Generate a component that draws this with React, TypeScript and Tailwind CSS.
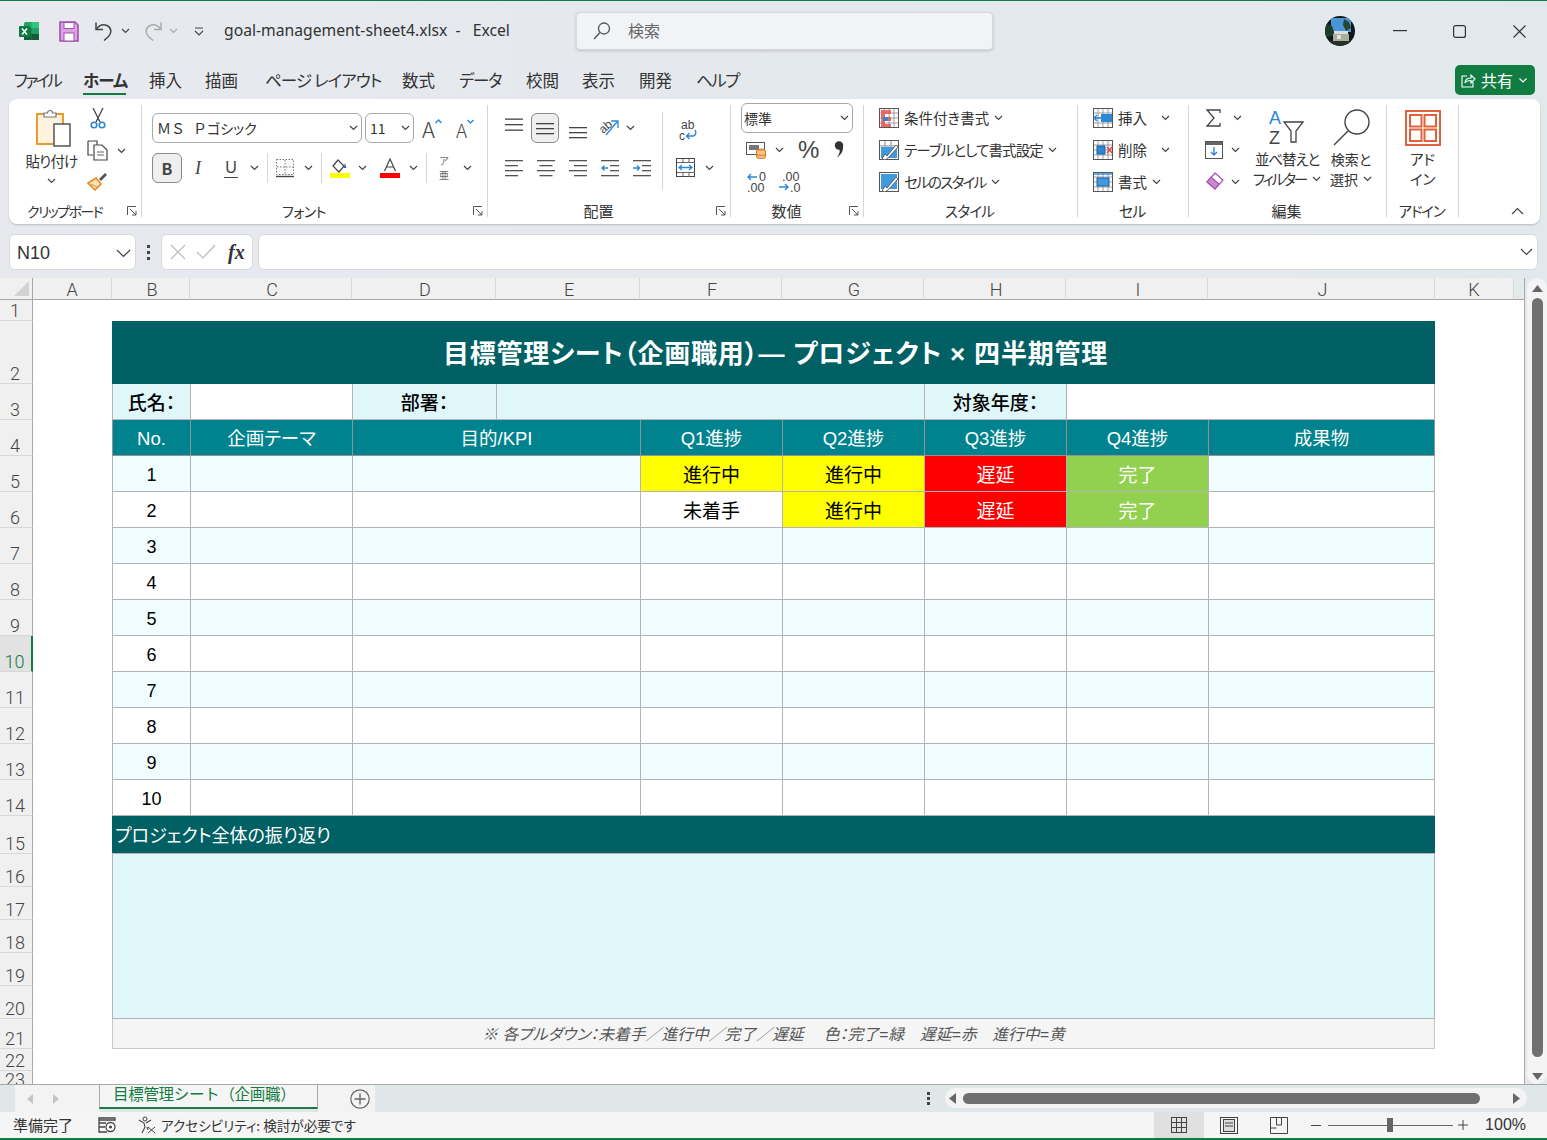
import type { ReactNode } from "react";

const GRAY = "#444";

function Chev({ className = "" }: { className?: string }) {
  return (
    <svg width="9" height="6" viewBox="0 0 9 6" className={className}>
      <path d="M1 1l3.5 3.5L8 1" fill="none" stroke={GRAY} strokeWidth="1.2" />
    </svg>
  );
}

function ExcelLogo() {
  return (
    <svg width="20" height="20" viewBox="0 0 20 20">
      <rect x="5" y="1" width="15" height="18" rx="1.5" fill="#21a366" />
      <rect x="12.5" y="1" width="7.5" height="6" fill="#33c481" />
      <rect x="5" y="7" width="7.5" height="6" fill="#107c41" />
      <rect x="12.5" y="13" width="7.5" height="6" fill="#185c37" />
      <rect x="5" y="13" width="7.5" height="6" fill="#185c37" />
      <rect x="0" y="5" width="11" height="11" rx="1" fill="#0e7a43" />
      <path d="M3 7.5l5 6M8 7.5l-5 6" stroke="#fff" strokeWidth="1.5" />
    </svg>
  );
}

function SaveIcon() {
  return (
    <svg width="20" height="21" viewBox="0 0 20 21">
      <path d="M1 1h15l3 3v16H1z" fill="#d9a7e0" stroke="#a24fb3" strokeWidth="1.6" />
      <rect x="5" y="1.5" width="10" height="6" fill="#fff" stroke="#a24fb3" />
      <rect x="5" y="12" width="10" height="8" fill="#fff" stroke="#a24fb3" />
    </svg>
  );
}

function Undo({ color }: { color: string }) {
  return (
    <svg width="20" height="20" viewBox="0 0 20 20">
      <path d="M2 1.5v7h7" fill="none" stroke={color} strokeWidth="1.5" />
      <path d="M2.5 8C5 4.5 9 3 13 4.5c4.5 2 5 7.5 1.5 11L10 19.5" fill="none" stroke={color} strokeWidth="1.5" />
    </svg>
  );
}

function SearchIcon() {
  return (
    <svg width="20" height="20" viewBox="0 0 20 20">
      <circle cx="12" cy="7.5" r="5.5" fill="none" stroke="#555" strokeWidth="1.3" />
      <path d="M8 11.5L2 18" stroke="#555" strokeWidth="1.4" />
    </svg>
  );
}

function Avatar() {
  return (
    <svg width="30" height="30" viewBox="0 0 30 30">
      <defs>
        <clipPath id="av">
          <circle cx="15" cy="15" r="15" />
        </clipPath>
      </defs>
      <g clipPath="url(#av)">
        <rect width="30" height="30" fill="#10181c" />
        <rect x="6" y="2" width="20" height="14" fill="#4a95d8" />
        <path d="M19 3l5 3 2 6-5 3-3-6z" fill="#24482f" />
        <path d="M0 7l7 3 3 9-10 3z" fill="#1f3d2a" />
        <rect x="9" y="15" width="14" height="3" fill="#d9dfe0" />
        <rect x="8" y="18" width="16" height="7" fill="#a9ae9f" />
        <rect x="12" y="19" width="4" height="4" fill="#e4e6dc" />
        <rect x="0" y="25" width="30" height="5" fill="#2b2f2c" />
      </g>
    </svg>
  );
}

function PasteIcon() {
  return (
    <svg width="36" height="38" viewBox="0 0 36 38">
      <rect x="1" y="5" width="26" height="30" fill="#fff3e0" stroke="#ec9a2e" strokeWidth="2" />
      <path d="M8 8V4h3.5a2.5 2.5 0 015 0H20v4z" fill="#fff" stroke="#777" strokeWidth="1.2" />
      <rect x="18" y="15" width="16" height="22" fill="#fff" stroke="#555" strokeWidth="1.5" />
    </svg>
  );
}

function ScissorsIcon() {
  return (
    <svg width="16" height="21" viewBox="0 0 16 21">
      <path d="M3 0l7 14M13 0L6 14" stroke="#444" strokeWidth="1.3" />
      <circle cx="4" cy="17" r="2.8" fill="none" stroke="#2b88d8" strokeWidth="1.6" />
      <circle cx="12" cy="17" r="2.8" fill="none" stroke="#2b88d8" strokeWidth="1.6" />
    </svg>
  );
}

function CopyIcon() {
  return (
    <svg width="21" height="21" viewBox="0 0 21 21">
      <path d="M1 1h9v4M1 1v14h5" fill="none" stroke="#444" strokeWidth="1.2" />
      <path d="M7 5h8l5 5v10H7z" fill="#fff" stroke="#444" strokeWidth="1.2" />
      <path d="M10 12h7M10 15h7" stroke="#666" />
    </svg>
  );
}

function BrushIcon() {
  return (
    <svg width="21" height="19" viewBox="0 0 21 19">
      <path d="M1 11l8-5 5 6-6 6z" fill="#fbe3bf" stroke="#e88a1e" strokeWidth="1.6" />
      <path d="M4 12l6 3" stroke="#e88a1e" />
      <path d="M12 7l6-6 2 2-6 6z" fill="#555" />
    </svg>
  );
}

function Launcher() {
  return (
    <svg width="10" height="10" viewBox="0 0 10 10">
      <path d="M0.5 9V0.5H9" fill="none" stroke="#555" />
      <path d="M3 3l6 6M5 9h4V5" fill="none" stroke="#555" />
    </svg>
  );
}

function GrowFont({ up }: { up: boolean }) {
  return (
    <span className="flex h-[20px] items-start leading-none">
      <span className={`${up ? "text-[22px]" : "mt-[2px] text-[19px]"} leading-[20px] font-light text-[#444]`}>A</span>
      <svg width="7" height="5" viewBox="0 0 7 5" className="mt-[1px]">
        <path d={up ? "M0.5 4l3-3 3 3" : "M0.5 1l3 3 3-3"} fill="none" stroke="#2b88d8" strokeWidth="1.4" />
      </svg>
    </span>
  );
}

function BorderIcon() {
  return (
    <svg width="18" height="19" viewBox="0 0 18 19">
      <rect x="0.5" y="0.5" width="17" height="15" fill="none" stroke="#777" strokeDasharray="1.5 1.5" />
      <path d="M9 1v14M1 8h16" stroke="#777" strokeDasharray="1.5 1.5" />
      <path d="M0 17.5h18" stroke="#444" strokeWidth="1.4" />
    </svg>
  );
}

function FillIcon() {
  return (
    <svg width="20" height="20" viewBox="0 0 20 20">
      <path d="M3 8l5-6 6 6-5 6z" fill="#fff" stroke="#444" strokeWidth="1.2" />
      <path d="M15 5l1.5 5h-3z" fill="#2b6cb0" />
      <rect x="0" y="15" width="20" height="5" fill="#ffff00" />
    </svg>
  );
}

function FontColorIcon() {
  return (
    <svg width="20" height="20" viewBox="0 0 20 20">
      <path d="M4.5 13L10 1l5.5 12M6.5 9h7" fill="none" stroke="#444" strokeWidth="1.2" />
      <rect x="0" y="15" width="20" height="5" fill="#ff0000" />
    </svg>
  );
}

function Lines({ rows }: { rows: number[] }) {
  return (
    <svg width="18" height="18" viewBox="0 0 18 18">
      {rows.map((y) => (
        <rect key={y} x="0" y={y} width="18" height="1.3" fill="#444" />
      ))}
    </svg>
  );
}

function LeftLines({ align }: { align: "l" | "c" | "r" }) {
  const widths = [18, 13, 18, 13];
  return (
    <svg width="18" height="18" viewBox="0 0 18 18">
      {widths.map((w, i) => (
        <rect
          key={i}
          x={align === "l" ? 0 : align === "r" ? 18 - w : (18 - w) / 2}
          y={1 + i * 5}
          width={w}
          height="1.3"
          fill="#555"
        />
      ))}
    </svg>
  );
}

function IndentIcon({ inc }: { inc: boolean }) {
  return (
    <svg width="18" height="18" viewBox="0 0 18 18">
      <rect x="0" y="1" width="18" height="1.3" fill="#555" />
      <rect x="9" y="6" width="9" height="1.3" fill="#555" />
      <rect x="9" y="11" width="9" height="1.3" fill="#555" />
      <rect x="0" y="16" width="18" height="1.3" fill="#555" />
      <path d={inc ? "M0 9h6M4 6.5L6.5 9 4 11.5" : "M7 9H1M3.5 6.5L1 9l2.5 2.5"} fill="none" stroke="#2b88d8" strokeWidth="1.4" />
    </svg>
  );
}

function OrientIcon() {
  return (
    <svg width="22" height="20" viewBox="0 0 22 20" className="overflow-visible">
      <text x="1" y="13" fontSize="12" fill="#444" transform="rotate(-40 7 9)" fontFamily="Liberation Sans">ab</text>
      <path d="M8 17L19 4M13 3h7v7" fill="none" stroke="#2b88d8" strokeWidth="1.3" />
    </svg>
  );
}

function WrapIcon() {
  return (
    <svg width="20" height="20" viewBox="0 0 20 20" className="overflow-visible">
      <text x="3" y="9" fontSize="12" fill="#444" fontFamily="Liberation Sans">ab</text>
      <text x="1" y="20" fontSize="12" fill="#444" fontFamily="Liberation Sans">c</text>
      <path d="M17 10c2 3 0 6-2 6H9M11.5 13L8.5 16l3 3" fill="none" stroke="#2b88d8" strokeWidth="1.4" />
    </svg>
  );
}

function MergeIcon() {
  return (
    <svg width="20" height="20" viewBox="0 0 20 20">
      <rect x="0.5" y="0.5" width="18" height="18" fill="#fff" stroke="#444" />
      <path d="M1 4.5h18M1 14.5h18M7 1v4M13 1v4M7 15v4M13 15v4" stroke="#666" />
      <path d="M3 9.5h13M6 7L3 9.5 6 12M13 7l3 2.5L13 12" fill="none" stroke="#2b88d8" strokeWidth="1.3" />
    </svg>
  );
}

function AccountingIcon() {
  return (
    <svg width="21" height="20" viewBox="0 0 21 20">
      <rect x="0.5" y="2.5" width="18" height="12" fill="#fff" stroke="#555" />
      <rect x="3" y="5" width="10" height="5" fill="#777" />
      <ellipse cx="15" cy="11" rx="4.5" ry="2" fill="#f5a54a" stroke="#d9741c" />
      <path d="M10.5 11v6c0 2 9 2 9 0v-6" fill="#f8c488" stroke="#d9741c" />
      <path d="M10.5 14c0 2 9 2 9 0" fill="none" stroke="#d9741c" />
    </svg>
  );
}

function CommaIcon() {
  return (
    <svg width="10" height="17" viewBox="0 0 10 17">
      <circle cx="5" cy="4.5" r="4.2" fill="#333" />
      <path d="M9 5c0.5 5-2 9-6 11.5C5.5 13 6 11 5.5 8z" fill="#333" />
    </svg>
  );
}

function DecimalIcon({ inc }: { inc: boolean }) {
  return (
    <svg width="22" height="22" viewBox="0 0 22 22" fontFamily="Liberation Sans" fontSize="12.5" fill="#444" className="overflow-visible">
      {inc ? (
        <>
          <text x="13" y="10">0</text>
          <text x="1" y="21">.00</text>
          <path d="M11 6H2M5 3L2 6l3 3" fill="none" stroke="#2b88d8" strokeWidth="1.4" />
        </>
      ) : (
        <>
          <text x="4" y="10">.00</text>
          <text x="12" y="21">.0</text>
          <path d="M1 16h9M7 13l3 3-3 3" fill="none" stroke="#2b88d8" strokeWidth="1.4" />
        </>
      )}
    </svg>
  );
}

function TableGrid({ children }: { children?: ReactNode }) {
  return (
    <svg width="20" height="20" viewBox="0 0 20 20">
      <rect x="0.5" y="0.5" width="19" height="19" fill="#fff" stroke="#555" />
      <path d="M5 1v18M10 1v18M15 1v18M1 5h18M1 10h18M1 15h18" stroke="#888" strokeWidth="0.8" />
      {children}
    </svg>
  );
}

function CondIcon() {
  return (
    <TableGrid>
      <path d="M2 2h10v4H6v3h6v4H6v3h6v3H2z" fill="#ef5350" fillOpacity="0.85" />
      <rect x="4" y="9" width="5" height="4" fill="#2b88d8" />
    </TableGrid>
  );
}

function TableStyleIcon() {
  return (
    <svg width="20" height="20" viewBox="0 0 20 20">
      <rect x="0.5" y="0.5" width="19" height="19" fill="#fff" stroke="#555" />
      <path d="M6 1v5M12 1v5M1 6h18" stroke="#888" />
      <rect x="2" y="7" width="16" height="11" fill="#3f9ae0" />
      <path d="M3 19l3-5 2 2 9-11 2 2-9 10-4 3z" fill="#fff" stroke="#445" strokeWidth="0.8" />
    </svg>
  );
}

function CellStyleIcon() {
  return (
    <svg width="20" height="20" viewBox="0 0 20 20">
      <rect x="0.5" y="0.5" width="19" height="19" fill="#fff" stroke="#555" />
      <rect x="2" y="2" width="16" height="15" fill="#3f9ae0" />
      <path d="M3 19l3-5 2 2 9-11 2 2-9 10-4 3z" fill="#fff" stroke="#445" strokeWidth="0.8" />
    </svg>
  );
}

function InsertIcon() {
  return (
    <TableGrid>
      <rect x="8" y="6" width="11" height="8" fill="#2b88d8" />
      <path d="M9 10H1M4 7l-3 3 3 3" fill="none" stroke="#2b88d8" strokeWidth="1.5" />
    </TableGrid>
  );
}

function DeleteIcon() {
  return (
    <TableGrid>
      <rect x="4" y="6" width="8" height="8" fill="#2b88d8" stroke="#1a5fa0" />
      <path d="M14 7l5 6M19 7l-5 6" stroke="#e53935" strokeWidth="1.3" />
    </TableGrid>
  );
}

function FormatIcon() {
  return (
    <TableGrid>
      <rect x="4" y="6" width="12" height="8" fill="#3f9ae0" stroke="#1a5fa0" />
      <path d="M1 2h18" stroke="#2b88d8" strokeWidth="1.4" />
    </TableGrid>
  );
}

function SigmaIcon() {
  return (
    <svg width="17" height="18" viewBox="0 0 17 18">
      <path d="M15 4V1H2l7 8-7 8h13v-3" fill="none" stroke="#444" strokeWidth="1.3" />
    </svg>
  );
}

function FillDownIcon() {
  return (
    <svg width="18" height="18" viewBox="0 0 18 18">
      <rect x="0.5" y="0.5" width="17" height="17" fill="#fff" stroke="#555" />
      <rect x="1" y="1" width="16" height="3" fill="#666" />
      <path d="M9 6v8M6 11l3 3 3-3" fill="none" stroke="#2b88d8" strokeWidth="1.4" />
    </svg>
  );
}

function EraserIcon() {
  return (
    <svg width="20" height="20" viewBox="0 0 20 20">
      <path d="M10 1l8 7-8 9-8-7z" fill="#fff" stroke="#a24fb3" strokeWidth="1.2" />
      <path d="M2 10l4-5 8 7-4 5z" fill="#c78bd2" stroke="#a24fb3" strokeWidth="1.2" />
    </svg>
  );
}

function SortFilterIcon() {
  return (
    <svg width="36" height="36" viewBox="0 0 36 36" fontFamily="Liberation Sans" fontSize="18">
      <text x="0" y="14" fill="#2b88d8">A</text>
      <text x="0" y="34" fill="#444">Z</text>
      <path d="M15 12h19l-7 9v11h-5V21z" fill="#fff" stroke="#444" strokeWidth="1.3" />
    </svg>
  );
}

function FindIcon() {
  return (
    <svg width="40" height="37" viewBox="0 0 40 37">
      <circle cx="26" cy="13" r="12" fill="#fff" stroke="#444" strokeWidth="1.4" />
      <path d="M17 22L3 36" stroke="#444" strokeWidth="1.4" />
    </svg>
  );
}

function AddinIcon() {
  return (
    <svg width="36" height="36" viewBox="0 0 36 36">
      <rect x="1" y="1" width="34" height="34" fill="#fff" stroke="#e0623a" strokeWidth="2" />
      <rect x="5" y="5" width="11.5" height="11.5" fill="none" stroke="#e0623a" strokeWidth="2" />
      <rect x="19.5" y="5" width="11.5" height="11.5" fill="none" stroke="#e0623a" strokeWidth="2" />
      <rect x="5" y="19.5" width="11.5" height="11.5" fill="none" stroke="#e0623a" strokeWidth="2" />
      <rect x="19.5" y="19.5" width="11.5" height="11.5" fill="none" stroke="#e0623a" strokeWidth="2" />
    </svg>
  );
}

function ShareIcon() {
  return (
    <svg width="15" height="15" viewBox="0 0 15 15">
      <path d="M6 3H1v11h11V9" fill="none" stroke="#fff" strokeWidth="1.1" />
      <path d="M4 10c0-4 3-5 6-5V2l4 4-4 4V7.5c-3 0-5 .5-6 2.5z" fill="none" stroke="#fff" strokeWidth="1.1" />
    </svg>
  );
}

function Group({
  label,
  labelClass = "",
  launcher,
  className,
  children,
}: {
  label: string;
  labelClass?: string;
  launcher?: boolean;
  className: string;
  children: ReactNode;
}) {
  return (
    <div className={`my-[6px] flex h-[112px] shrink-0 flex-col border-r border-[#d5d5d5] ${className}`}>
      <div className="h-[97px]">{children}</div>
      <div
        className={`grid h-[15px] grid-cols-[1fr_auto_1fr] items-center leading-[18px] text-[#333] ${
          launcher ? "pr-[21px]" : "pr-[2px]"
        }`}
      >
        <span />
        <span className={`whitespace-pre ${labelClass}`}>{label}</span>
        {launcher ? (
          <span className="-mr-[17px] justify-self-end">
            <Launcher />
          </span>
        ) : (
          <span />
        )}
      </div>
    </div>
  );
}

function Divider() {
  return <div className="h-[30px] w-px shrink-0 bg-[#d5d5d5]" />;
}

function TitleBar() {
  return (
    <div className="flex h-[60px] items-center text-[#333]">
      <div className="ml-[19px]">
        <ExcelLogo />
      </div>
      <div className="ml-[20px]">
        <SaveIcon />
      </div>
      <div className="ml-[15px]">
        <Undo color="#444" />
      </div>
      <Chev className="ml-[7px]" />
      <div className="ml-[13px] scale-x-[-1]">
        <Undo color="#aaa" />
      </div>
      <svg width="9" height="6" viewBox="0 0 9 6" className="ml-[6px]">
        <path d="M1 1l3.5 3.5L8 1" fill="none" stroke="#aaa" strokeWidth="1.2" />
      </svg>
      <svg width="10" height="9" viewBox="0 0 10 9" className="ml-[16px]">
        <path d="M1 1h8M1 4l4 4 4-4" fill="none" stroke="#444" strokeWidth="1.1" />
      </svg>
      <span className="ml-[20px] w-[352px] font-['Noto_Sans',sans-serif] text-[15.7px] whitespace-pre">goal-management-sheet4.xlsx  -   Excel</span>
      <div className="flex h-[38px] w-[417px] items-center rounded-[4px] border border-[#d8dade] bg-[#f1f3f6] pl-[15px] shadow-[0_1px_3px_rgba(0,0,0,0.18)]">
        <SearchIcon />
        <span className="-mt-[2px] ml-[16px] text-[16px] text-[#666]">検索</span>
      </div>
      <div className="ml-[332px]">
        <Avatar />
      </div>
      <svg width="14" height="2" viewBox="0 0 14 2" className="ml-[38px]">
        <rect width="14" height="1.2" fill="#333" />
      </svg>
      <svg width="13" height="13" viewBox="0 0 13 13" className="ml-[46px]">
        <rect x="0.6" y="0.6" width="11.8" height="11.8" rx="2" fill="none" stroke="#333" strokeWidth="1.2" />
      </svg>
      <svg width="13" height="13" viewBox="0 0 13 13" className="ml-[47px]">
        <path d="M0.5 0.5l12 12M12.5 0.5l-12 12" stroke="#333" strokeWidth="1.1" />
      </svg>
    </div>
  );
}

const TABS = [
  ["ファイル", "tracking-[-2.8px] w-[46px]"],
  ["ホーム", "tracking-[-1px] w-[43px] h-[27px] border-b-[2.5px] border-[#107c41] font-bold"],
  ["挿入", "w-[33px]"],
  ["描画", "w-[34px]"],
  ["ページ レイアウト", "tracking-[-0.9px] ml-[3px] w-[114px]"],
  ["数式", "w-[34px]"],
  ["データ", "tracking-[-1.4px] w-[44px]"],
  ["校閲", "w-[33px]"],
  ["表示", "w-[34px]"],
  ["開発", "w-[34px]"],
  ["ヘルプ", "tracking-[-1.4px] w-[42px]"],
];

function MenuBar() {
  return (
    <div className="flex h-[38px] items-start pr-[12px] pl-[14px]">
      <div className="flex gap-[23px] pt-[7px] text-[16.5px] leading-[24px] text-[#333]">
        {TABS.map(([t, cls]) => (
          <span key={t} className={`whitespace-pre ${cls}`}>
            {t}
          </span>
        ))}
      </div>
      <div className="mt-[4px] ml-auto flex h-[30px] w-[80px] items-center rounded-[5px] bg-[#107c41] pl-[6px] text-[16px] text-white">
        <ShareIcon />
        <span className="ml-[5px]">共有</span>
        <svg width="8" height="5" viewBox="0 0 8 5" className="ml-[6px]">
          <path d="M0.5 0.5L4 4l3.5-3.5" fill="none" stroke="#fff" strokeWidth="1.2" />
        </svg>
      </div>
    </div>
  );
}

function Select({ label, className }: { label: ReactNode; className: string }) {
  return (
    <div
      className={`flex h-[30px] shrink-0 items-center justify-between rounded-[6px] border border-[#a8a8a8] bg-white pr-[3px] text-[14px] text-[#333] ${className}`}
    >
      <span className="whitespace-pre">{label}</span>
      <Chev />
    </div>
  );
}

function RibbonRow({
  icon,
  label,
  labelClass = "",
  chevClass,
}: {
  icon: ReactNode;
  label: string;
  labelClass?: string;
  chevClass: string;
}) {
  return (
    <div className="flex h-[24px] items-center">
      {icon}
      <span className={`ml-[5px] text-[14.5px] whitespace-pre text-[#333] ${labelClass}`}>{label}</span>
      <Chev className={chevClass} />
    </div>
  );
}

function Ribbon() {
  return (
    <div className="mx-[9px] flex h-[125px] w-[1531px] rounded-[8px] bg-white shadow-[0_1px_2px_rgba(0,0,0,0.2)]">
      <Group label="クリップボード" labelClass="text-[14px] tracking-[-1.6px]" launcher className="w-[133px]">
        <div className="flex">
          <div className="ml-[17px] flex w-[51px] flex-col items-center pt-[4px]">
            <div className="ml-[5px]">
              <PasteIcon />
            </div>
            <span className="mt-[5px] text-[14.5px] leading-[18px] tracking-[-0.8px] whitespace-pre text-[#333]">貼り付け</span>
            <Chev className="mt-[8px]" />
          </div>
          <div className="ml-[10px] flex flex-col pt-[3px]">
            <div className="ml-[3px]">
              <ScissorsIcon />
            </div>
            <div className="mt-[11px] flex items-center">
              <CopyIcon />
              <Chev className="ml-[9px]" />
            </div>
            <div className="mt-[11px]">
              <BrushIcon />
            </div>
          </div>
        </div>
      </Group>

      <Group label="フォント" labelClass="text-[14px] tracking-[-0.5px]" launcher className="w-[346px]">
        <div className="mt-[8px] flex h-[30px] items-center pl-[10px]">
          <Select
            label={
              <>
                <span className="[font-feature-settings:normal]">ＭＳ</span>
                <span className="ml-[8px] [font-feature-settings:normal]">Ｐ</span>
                ゴシック
              </>
            }
            className="w-[210px] pl-[4px]"
          />
          <Select label="11" className="ml-[3px] w-[49px] pl-[4px]" />
          <div className="ml-[8px]">
            <GrowFont up />
          </div>
          <div className="ml-[14px]">
            <GrowFont up={false} />
          </div>
        </div>
        <div className="mt-[10px] flex h-[30px] items-center pl-[10px] text-[#444]">
          <div className="flex h-[30px] w-[30px] items-center justify-center rounded-[6px] border border-[#8a8a8a] bg-[#efefef] text-[16px] font-bold">
            B
          </div>
          <span className="ml-[13px] w-[10px] font-['Liberation_Serif',serif] text-[18px] italic">I</span>
          <span className="ml-[19px] w-[14px] border-b border-[#444] text-center font-['Liberation_Sans',sans-serif] text-[16px] leading-[18px]">U</span>
          <Chev className="ml-[12px]" />
          <div className="ml-[8px]">
            <Divider />
          </div>
          <div className="ml-[8px]">
            <BorderIcon />
          </div>
          <Chev className="ml-[10px]" />
          <div className="ml-[8px]">
            <Divider />
          </div>
          <div className="ml-[8px]">
            <FillIcon />
          </div>
          <Chev className="ml-[8px]" />
          <div className="ml-[13px]">
            <FontColorIcon />
          </div>
          <Chev className="ml-[9px]" />
          <div className="ml-[8px]">
            <Divider />
          </div>
          <div className="ml-[10px] flex w-[14px] flex-col items-center gap-[2px] text-[10px] leading-[12px] text-[#666]">
            <span>ア</span>
            <span>亜</span>
          </div>
          <Chev className="ml-[12px]" />
        </div>
      </Group>

      <Group label="配置" labelClass="text-[15px]" launcher className="w-[243px]">
        <div className="flex">
          <div className="mt-[7px] h-[78px] w-[175px] border-r border-[#d5d5d5] pl-[17px]">
            <div className="mt-[1px] flex h-[30px] items-center">
              <div className="-mt-[7px]">
                <Lines rows={[2.5, 8, 13.5]} />
              </div>
              <div className="ml-[8px] flex h-[30px] w-[28px] items-center justify-center rounded-[6px] border border-[#8a8a8a] bg-[#efefef]">
                <Lines rows={[4, 9, 14]} />
              </div>
              <div className="mt-[6px] ml-[10px]">
                <Lines rows={[5, 10, 15]} />
              </div>
              <div className="ml-[11px]">
                <OrientIcon />
              </div>
              <Chev className="ml-[6px]" />
            </div>
            <div className="mt-[16px] flex gap-[14px]">
              <LeftLines align="l" />
              <LeftLines align="c" />
              <LeftLines align="r" />
              <IndentIcon inc={false} />
              <IndentIcon inc />
            </div>
          </div>
          <div className="flex flex-col pt-[15px] pl-[13px]">
            <div className="ml-[2px]">
              <WrapIcon />
            </div>
            <div className="mt-[18px] flex items-center">
              <MergeIcon />
              <Chev className="ml-[9px]" />
            </div>
          </div>
        </div>
      </Group>

      <Group label="数値" labelClass="text-[15px]" launcher className="w-[133px]">
        <div className="-mt-[2px] pl-[10px]">
          <Select label="標準" className="w-[112px] pl-[2px]" />
          <div className="mt-[5px] flex h-[24px] items-center pl-[5px]">
            <AccountingIcon />
            <Chev className="ml-[8px]" />
            <span className="ml-[14px] font-['Liberation_Sans',sans-serif] text-[24px] leading-[24px] font-light text-[#444]">%</span>
            <div className="-mt-[2px] ml-[15px]">
              <CommaIcon />
            </div>
          </div>
          <div className="mt-[8px] flex h-[24px] items-center gap-[10px] pl-[5px]">
            <DecimalIcon inc />
            <DecimalIcon inc={false} />
          </div>
        </div>
      </Group>

      <Group label="スタイル" labelClass="text-[14.5px] tracking-[-0.8px]" className="w-[214px]">
        <div className="flex flex-col gap-[8px] pt-[1px] pl-[15px]">
          <RibbonRow icon={<CondIcon />} label="条件付き書式" chevClass="ml-[5px]" />
          <RibbonRow icon={<TableStyleIcon />} label="テーブルとして書式設定" labelClass="tracking-[-0.9px]" chevClass="ml-[5px]" />
          <RibbonRow icon={<CellStyleIcon />} label="セルのスタイル" labelClass="tracking-[-1.7px]" chevClass="ml-[5px]" />
        </div>
      </Group>

      <Group label="セル" labelClass="text-[15px] tracking-[-1px]" className="w-[111px]">
        <div className="flex flex-col gap-[8px] pt-[1px] pl-[15px]">
          <RibbonRow icon={<InsertIcon />} label="挿入" chevClass="ml-[14px]" />
          <RibbonRow icon={<DeleteIcon />} label="削除" chevClass="ml-[14px]" />
          <RibbonRow icon={<FormatIcon />} label="書式" chevClass="ml-[5px]" />
        </div>
      </Group>

      <Group label="編集" labelClass="text-[15px]" className="w-[198px]">
        <div className="flex">
          <div className="flex w-[63px] shrink-0 flex-col gap-[8px] pt-[1px] pl-[16px]">
            <div className="flex h-[24px] items-center">
              <SigmaIcon />
              <Chev className="ml-[11px]" />
            </div>
            <div className="flex h-[24px] items-center">
              <FillDownIcon />
              <Chev className="ml-[8px]" />
            </div>
            <div className="flex h-[24px] items-center">
              <EraserIcon />
              <Chev className="ml-[6px]" />
            </div>
          </div>
          <div className="flex w-[70px] shrink-0 flex-col items-center pt-[5px] text-[14.5px] leading-[20px] text-[#333]">
            <SortFilterIcon />
            <span className="mt-[3px] tracking-[-1.1px] whitespace-pre">並べ替えと</span>
            <span className="flex items-center tracking-[-2px] whitespace-pre">
              フィルター
              <Chev className="ml-[6px]" />
            </span>
          </div>
          <div className="ml-[6px] flex w-[46px] shrink-0 flex-col items-center pt-[4px] text-[14px] leading-[20px] text-[#333]">
            <FindIcon />
            <span className="mt-[3px] whitespace-pre">検索と</span>
            <span className="flex items-center whitespace-pre">
              選択
              <Chev className="ml-[5px]" />
            </span>
          </div>
        </div>
      </Group>

      <Group label="アドイン" labelClass="text-[14.5px] tracking-[-1.2px]" className="w-[72px]">
        <div className="flex flex-col items-center pt-[5px] text-[14.5px] leading-[20px] text-[#333]">
          <AddinIcon />
          <span className="mt-[3px]">アド</span>
          <span>イン</span>
        </div>
      </Group>

      <div className="flex flex-1 items-end justify-end pr-[16px] pb-[9px]">
        <svg width="13" height="8" viewBox="0 0 13 8">
          <path d="M1 7l5.5-5.5L12 7" fill="none" stroke="#444" strokeWidth="1.2" />
        </svg>
      </div>
    </div>
  );
}

function FormulaBar() {
  return (
    <div className="mx-[9px] mt-[10px] flex h-[36px] items-stretch">
      <div className="flex w-[127px] items-center justify-between rounded-[6px] border border-[#d9d9d9] bg-white pt-[2px] pr-[4px] pl-[7px] font-['Liberation_Sans',sans-serif] text-[18px] text-[#333]">
        N10
        <svg width="15" height="9" viewBox="0 0 15 9">
          <path d="M1 1l6.5 6.5L14 1" fill="none" stroke="#444" strokeWidth="1.2" />
        </svg>
      </div>
      <div className="ml-[11px] flex w-[3px] flex-col justify-center gap-[3px]">
        <span className="h-[3px] w-[3px] bg-[#444]" />
        <span className="h-[3px] w-[3px] bg-[#444]" />
        <span className="h-[3px] w-[3px] bg-[#444]" />
      </div>
      <div className="ml-[11px] flex w-[92px] items-center rounded-[6px] border border-[#d9d9d9] bg-white pl-[8px]">
        <svg width="16" height="16" viewBox="0 0 16 16">
          <path d="M1 1l14 14M15 1L1 15" stroke="#bbb" strokeWidth="1.2" />
        </svg>
        <svg width="20" height="16" viewBox="0 0 20 16" className="ml-[10px]">
          <path d="M1 8l6 6L19 1" fill="none" stroke="#bbb" strokeWidth="1.2" />
        </svg>
        <span className="ml-[12px] font-['Liberation_Serif',serif] text-[20px] font-bold text-[#333] italic">fx</span>
      </div>
      <div className="ml-[5px] flex flex-1 items-center justify-end rounded-[6px] border border-[#d9d9d9] bg-white pr-[4px]">
        <svg width="13" height="8" viewBox="0 0 13 8">
          <path d="M1 1l5.5 5.5L12 1" fill="none" stroke="#444" strokeWidth="1.2" />
        </svg>
      </div>
    </div>
  );
}

const COLS = [
  ["A", "col-start-2"],
  ["B", "col-start-3 pl-[3px]"],
  ["C", "col-start-4 pl-[3px]"],
  ["D", "col-start-5 pl-[3px]"],
  ["E", "col-start-6 pl-[3px]"],
  ["F", "col-start-7 pl-[3px]"],
  ["G", "col-start-8 pl-[3px]"],
  ["H", "col-start-9 pl-[3px]"],
  ["I", "col-start-10 pl-[3px]"],
  ["J", "col-start-11 pl-[3px]"],
];

const CELL = "flex items-center justify-center border-l border-b border-[#b4b4b4]";
const HEAD = "flex items-center justify-center border-l border-b border-[#939393] bg-[#00838f] pt-[2px] text-[18.5px] text-white";
const LABEL = `${CELL} bg-[#e0f7fa] pt-[5px] text-[19px] font-medium text-black`;

const STATUS: Record<string, string> = {
  進行中: "bg-[#ffff00] text-black",
  遅延: "bg-[#ff0000] text-white",
  完了: "bg-[#92d050] text-white",
  未着手: "bg-white text-black",
};

const PROGRESS: Record<number, string[]> = {
  1: ["進行中", "進行中", "遅延", "完了"],
  2: ["未着手", "進行中", "遅延", "完了"],
};

function RowHead({ n, selected, clipped }: { n: number; selected?: boolean; clipped?: boolean }) {
  return (
    <div
      className={`col-start-1 flex justify-center overflow-hidden pr-[2px] font-['Roboto',sans-serif] text-[18px] leading-[18px] font-light ${
        clipped ? "items-start" : "items-end border-b border-[#d8d8d8]"
      } ${
        selected
          ? "border-r-2 border-r-[#107c41] bg-[#e2e2e2] text-[#107c41]"
          : "border-r border-r-[#a8a8a8] bg-[#f0f0f0] text-[#444]"
      }`}
    >
      {n}
    </div>
  );
}

function Sheet() {
  const rows = Array.from({ length: 10 }, (_, i) => i + 1);
  return (
    <div className="grid h-[806px] w-[1525px] shrink-0 grid-cols-[33px_79px_78px_162px_144px_144px_142px_142px_142px_142px_227px_90px] grid-rows-[22px_21px_63px_36px_36px_36px_36px_36px_36px_36px_36px_36px_36px_36px_36px_38px_33px_33px_33px_33px_33px_30px_22px_13px] overflow-hidden border-r border-[#a8a8a8] bg-white font-['Liberation_Sans','Noto_Sans_CJK_JP',sans-serif] text-black">
      <div className="flex items-end justify-end border-r border-b border-[#a8a8a8] bg-[#f0f0f0] pr-[3px] pb-[3px]">
        <svg width="15" height="15" viewBox="0 0 15 15">
          <path d="M15 0v15H0z" fill="#d2d2d2" />
        </svg>
      </div>
      {COLS.map(([c, pos]) => (
        <div
          key={c}
          className={`${pos} flex items-center justify-center border-r border-b border-r-[#d8d8d8] border-b-[#a8a8a8] bg-[#f0f0f0] pt-[2px] font-['Roboto',sans-serif] text-[18px] font-light text-[#444]`}
        >
          {c}
        </div>
      ))}
      <div className="col-start-12 border-b border-[#a8a8a8] bg-[#e4e9ec]">
        <div className="flex h-full w-[79px] items-center justify-center border-r border-[#d8d8d8] bg-[#f0f0f0] pt-[2px] font-['Roboto',sans-serif] text-[18px] font-light text-[#444]">
          K
        </div>
      </div>

      <RowHead n={1} />
      <RowHead n={2} />
      <div className="col-span-9 col-start-3 flex items-center justify-center bg-[#006064] pt-[4px] pl-[4px] text-[26px] font-bold tracking-[0.8px] text-white">
        目標管理シート（企画職用）— プロジェクト × 四半期管理
      </div>

      <RowHead n={3} />
      <div className={`col-start-3 ${LABEL}`}>氏名：</div>
      <div className={CELL} />
      <div className={LABEL}>部署：</div>
      <div className={`col-span-3 ${CELL} bg-[#e0f7fa]`} />
      <div className={LABEL}>対象年度：</div>
      <div className={`col-span-2 border-r ${CELL}`} />

      <RowHead n={4} />
      <div className={`col-start-3 ${HEAD}`}>No.</div>
      <div className={HEAD}>企画テーマ</div>
      <div className={`col-span-2 ${HEAD}`}>目的/KPI</div>
      <div className={HEAD}>Q1進捗</div>
      <div className={HEAD}>Q2進捗</div>
      <div className={HEAD}>Q3進捗</div>
      <div className={HEAD}>Q4進捗</div>
      <div className={`border-r ${HEAD}`}>成果物</div>

      {rows.flatMap((n) => {
        const bg = n % 2 === 1 ? "bg-[#effdff]" : "bg-white";
        const st = PROGRESS[n];
        return [
          <RowHead key={`h${n}`} n={n + 4} selected={n === 6} />,
          <div key={`b${n}`} className={`col-start-3 ${CELL} ${bg} pt-[3px] text-[18px]`}>
            {n}
          </div>,
          <div key={`c${n}`} className={`${CELL} ${bg}`} />,
          <div key={`d${n}`} className={`col-span-2 ${CELL} ${bg}`} />,
          ...[0, 1, 2, 3].map((q) => (
            <div key={`q${n}-${q}`} className={`${CELL} pt-[5px] text-[19px] ${st ? STATUS[st[q]] : bg}`}>
              {st ? st[q] : ""}
            </div>
          )),
          <div key={`j${n}`} className={`border-r ${CELL} ${bg}`} />,
        ];
      })}

      <RowHead n={15} />
      <div className="col-span-9 col-start-3 flex items-center border-b border-[#b4b4b4] bg-[#006064] pt-[3px] pl-[3px] text-[18px] text-white">
        プロジェクト全体の振り返り
      </div>

      <RowHead n={16} />
      <div className="col-span-9 col-start-3 row-span-5 border border-t-0 border-[#b4b4b4] bg-[#e0f7fa]" />
      <RowHead n={17} />
      <RowHead n={18} />
      <RowHead n={19} />
      <RowHead n={20} />

      <RowHead n={21} />
      <div className="col-span-9 col-start-3 flex items-center justify-center border border-t-0 border-[#c8c8c8] bg-[#f5f5f5] pt-[2px] text-[15.8px] text-[#555] italic">
        ※ 各プルダウン：未着手／進行中／完了／遅延　 色：完了=緑　遅延=赤　進行中=黄
      </div>
      <RowHead n={22} />
      <RowHead n={23} clipped />
    </div>
  );
}

function VScroll() {
  return (
    <div className="ml-[2px] flex h-[806px] w-[20px] shrink-0 flex-col items-center rounded-full bg-[#f4f4f4]">
      <svg width="11" height="7" viewBox="0 0 11 7" className="mt-[7px]">
        <path d="M5.5 0L11 7H0z" fill="#666" />
      </svg>
      <div className="mt-[6px] h-[759px] w-[11px] rounded-full bg-[#707070]" />
      <svg width="11" height="7" viewBox="0 0 11 7" className="mt-[16px]">
        <path d="M5.5 7L11 0H0z" fill="#666" />
      </svg>
    </div>
  );
}

function SheetTabs() {
  return (
    <div className="flex h-[28px] border-t border-[#a8a8a8] bg-[#dfe7e9]">
      <div className="ml-[15px] flex w-[84px] items-center gap-[20px] bg-[#f3f3f3] pl-[12px]">
        <svg width="6" height="10" viewBox="0 0 6 10">
          <path d="M6 0v10L0 5z" fill="#c4c4c4" />
        </svg>
        <svg width="6" height="10" viewBox="0 0 6 10">
          <path d="M0 0v10l6-5z" fill="#c4c4c4" />
        </svg>
      </div>
      <div className="-mt-px flex h-[25px] w-[219px] items-center border-x border-t border-b-[2.5px] border-x-[#a8a8a8] border-t-[#a8a8a8] border-b-[#1d7a46] bg-[#f5f5f5] pb-[4px] pl-[13px] text-[15.5px] tracking-[-0.3px] whitespace-pre text-[#107c41] [font-feature-settings:normal]">
        目標管理シート（企画職）
      </div>
      <div className="flex w-[57px] items-center justify-end bg-[#f3f3f3] pr-[5px]">
        <svg width="20" height="20" viewBox="0 0 20 20">
          <circle cx="10" cy="10" r="9.2" fill="none" stroke="#666" strokeWidth="1.2" />
          <path d="M10 4.5v11M4.5 10h11" stroke="#666" strokeWidth="1.4" />
        </svg>
      </div>
      <div className="ml-[552px] flex w-[3px] flex-col justify-center gap-[2px]">
        <span className="h-[3px] w-[3px] bg-[#444]" />
        <span className="h-[3px] w-[3px] bg-[#444]" />
        <span className="h-[3px] w-[3px] bg-[#444]" />
      </div>
      <div className="mt-[3px] ml-[15px] flex h-[20px] w-[582px] items-center rounded-full bg-[#f4f4f4] pl-[4px]">
        <svg width="7" height="11" viewBox="0 0 7 11">
          <path d="M7 0v11L0 5.5z" fill="#666" />
        </svg>
        <div className="ml-[7px] h-[11px] w-[517px] rounded-full bg-[#707070]" />
        <svg width="7" height="11" viewBox="0 0 7 11" className="ml-[33px]">
          <path d="M0 0v11l7-5.5z" fill="#666" />
        </svg>
      </div>
    </div>
  );
}

function StatusBar() {
  return (
    <div className="flex h-[28px] items-center border-b-2 border-[#107c41] bg-[#f5f5f5] text-[#333]">
      <span className="ml-[13px] text-[15px]">準備完了</span>
      <svg width="18" height="16" viewBox="0 0 18 16" className="ml-[25px]">
        <path d="M1 1h16v2H1zM1 1v14h8M1 6h7M1 10h6" fill="none" stroke="#444" strokeWidth="1.3" />
        <circle cx="12.5" cy="10" r="4.5" fill="#fff" stroke="#444" strokeWidth="1.3" />
        <circle cx="12.5" cy="10" r="1.6" fill="#444" />
      </svg>
      <svg width="18" height="18" viewBox="0 0 18 18" className="ml-[22px]">
        <circle cx="7" cy="3" r="2" fill="none" stroke="#444" />
        <path d="M1 4l5 3 1 4-3 6M13 4L8 7M9 11l1 3" fill="none" stroke="#444" strokeWidth="1.1" />
        <path d="M10 11l7 6M17 11l-7 6" stroke="#444" />
      </svg>
      <span className="ml-[5px] text-[13.6px] whitespace-pre">アクセシビリティ: 検討が必要です</span>
      <div className="ml-auto flex h-full items-center">
        <div className="flex h-full w-[50px] items-center justify-center bg-[#e0e0e0]">
          <svg width="16" height="16" viewBox="0 0 16 16">
            <rect x="0.5" y="0.5" width="15" height="15" fill="none" stroke="#444" />
            <path d="M5.5 1v14M10.5 1v14M1 5.5h14M1 10.5h14" stroke="#444" />
          </svg>
        </div>
        <svg width="18" height="17" viewBox="0 0 18 17" className="ml-[16px]">
          <rect x="0.5" y="0.5" width="17" height="16" fill="none" stroke="#444" />
          <rect x="3.5" y="2.5" width="11" height="12" fill="#ddd" stroke="#444" />
          <path d="M5 6h8M5 9h8" stroke="#444" />
        </svg>
        <svg width="18" height="17" viewBox="0 0 18 17" className="ml-[32px]">
          <path d="M0.5 16.5V0.5h17v16H0.5M6.5 1v7h5V1M0.5 11h6" fill="none" stroke="#444" />
        </svg>
        <div className="ml-[23px] h-px w-[10px] bg-[#444]" />
        <div className="relative ml-[7px] flex h-full w-[125px] items-center">
          <div className="h-px w-full bg-[#666]" />
          <div className="absolute left-[59px] h-[14px] w-[6px] bg-[#666]" />
        </div>
        <svg width="10" height="10" viewBox="0 0 10 10" className="ml-[5px]">
          <path d="M5 0v10M0 5h10" stroke="#444" />
        </svg>
        <span className="mr-[21px] ml-[16px] w-[42px] text-right font-['Liberation_Sans',sans-serif] text-[16px]">100%</span>
      </div>
    </div>
  );
}

export default function App() {
  return (
    <div className="h-[1140px] w-[1547px] overflow-hidden border-t border-[#107c41] bg-linear-to-r from-[#e7e9ef] to-[#e2e9ec] font-['Noto_Sans_CJK_JP','Noto_Sans',sans-serif] [font-feature-settings:'palt'] [&_svg]:shrink-0">
      <TitleBar />
      <MenuBar />
      <Ribbon />
      <FormulaBar />
      <div className="mt-[8px] flex">
        <Sheet />
        <VScroll />
      </div>
      <SheetTabs />
      <StatusBar />
    </div>
  );
}
